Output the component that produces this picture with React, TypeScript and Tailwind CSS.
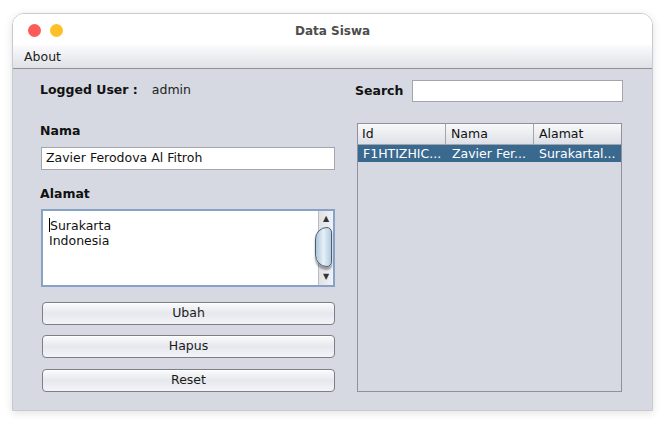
import React from "react";

const font = { fontFamily: '"DejaVu Sans", "Liberation Sans", sans-serif' };

function SwingButton({ label }: { label: string }) {
  return (
    <button className="h-[23px] w-full rounded-[4px] border border-[#7d7f86] bg-gradient-to-b from-[#fbfbfc] via-[#e6e8ee] to-[#f3f4f8] text-[12.5px] text-[#1a1a1a] shadow-[inset_0_1px_0_#ffffff]">
      {label}
    </button>
  );
}

export default function App() {
  return (
    <div className="h-[424px] w-[666px] bg-white pl-[12px] pt-[13px]" style={font}>
      <div className="flex h-[398px] w-[641px] flex-col overflow-hidden rounded-t-[12px] border border-[#c9cacd] shadow-[0_2px_8px_rgba(0,0,0,0.12)]">
        {/* title bar */}
        <div className="relative flex h-[31px] items-center justify-center bg-white pt-[2px]">
          <div className="absolute left-[15px] top-[10px] flex gap-[9px]">
            <span className="h-[13px] w-[13px] rounded-full bg-[#fc5b57]" />
            <span className="h-[13px] w-[13px] rounded-full bg-[#fdc127]" />
          </div>
          <span className="text-[12px] font-bold text-[#4d4d4d]">Data Siswa</span>
        </div>

        {/* menu bar */}
        <div className="flex h-[24px] items-center border-b border-[#8e9199] bg-gradient-to-b from-[#fbfbfc] to-[#dfe1e6] pl-[11px] pt-[2px] text-[12.5px] text-[#222]">
          About
        </div>

        {/* content */}
        <div className="flex flex-1 bg-[#d6d9e1] text-[12.5px]">
          <div className="flex w-[342px] flex-col pl-[27px] pt-[11px]">
            <div className="flex h-[20px] items-center pt-[1px] text-[#111]">
              <span className="font-bold">Logged User :</span>
              <span className="ml-[14px] text-[#222]">admin</span>
            </div>
            <div className="mt-[22px] font-bold text-[#111]">Nama</div>
            <div className="ml-[1px] mt-[6px] flex h-[23px] w-[294px] items-center border border-[#a3a6ad] bg-white pl-[4px] text-[#111]">
              Zavier Ferodova Al Fitroh
            </div>
            <div className="mt-[15px] font-bold text-[#111]">Alamat</div>
            <div className="ml-[1px] mt-[5px] flex h-[78px] w-[294px] border-2 border-[#86a3c5] bg-white">
              <div className="flex-1 pl-[6px] pt-[7px] leading-[15px] text-[#111]">
                <div className="flex items-center">
                  <span className="h-[14px] w-px bg-black" />
                  <span>Surakarta</span>
                </div>
                <div>Indonesia</div>
              </div>
              <div className="flex w-[15px] flex-col border-l border-[#b9bcc3] bg-gradient-to-r from-[#dfe2e8] to-[#f1f2f5]">
                <div className="flex h-[16px] items-center justify-center text-[8px] text-[#333]">▲</div>
                <div className="-ml-[4px] mr-[1px] h-[40px] rounded-l-[14px] rounded-r-[6px] border border-[#4d5c6e] bg-gradient-to-r from-[#aec7dc] via-[#e7f0f8] to-[#b5cbe0] shadow-[0_3px_2px_rgba(0,0,0,0.35)]" />
                <div className="flex-1" />
                <div className="flex h-[16px] items-center justify-center text-[8px] text-[#333]">▼</div>
              </div>
            </div>
            <div className="ml-[2px] mt-[15px] flex w-[293px] flex-col gap-[10.5px]">
              <SwingButton label="Ubah" />
              <SwingButton label="Hapus" />
              <SwingButton label="Reset" />
            </div>
          </div>

          <div className="flex flex-col pt-[11px]">
            <div className="flex h-[22px] items-center">
              <span className="font-bold text-[#111]">Search</span>
              <div className="ml-[9px] h-[22px] w-[211px] border border-[#a3a6ad] bg-white" />
            </div>
            <div className="ml-[2px] mt-[21px] flex h-[269px] w-[265px] flex-col border border-[#8f929a]">
              <div className="flex h-[21px] border-b border-[#a2a5ac] bg-gradient-to-b from-[#f8f9fa] to-[#dde0e6] text-[#111]">
                <div className="w-[88px] border-r border-[#a2a5ac] pl-[4px] leading-[20px]">Id</div>
                <div className="w-[88px] border-r border-[#a2a5ac] pl-[5px] leading-[20px]">Nama</div>
                <div className="flex-1 pl-[5px] leading-[20px]">Alamat</div>
              </div>
              <div className="flex h-[17px] bg-[#3a6990] leading-[17px] text-white">
                <div className="w-[88px] pl-[5px]">F1HTIZHIC...</div>
                <div className="w-[88px] pl-[6px]">Zavier Fer...</div>
                <div className="flex-1 pl-[5px]">Surakartal...</div>
              </div>
            </div>
          </div>
        </div>
      </div>
    </div>
  );
}
